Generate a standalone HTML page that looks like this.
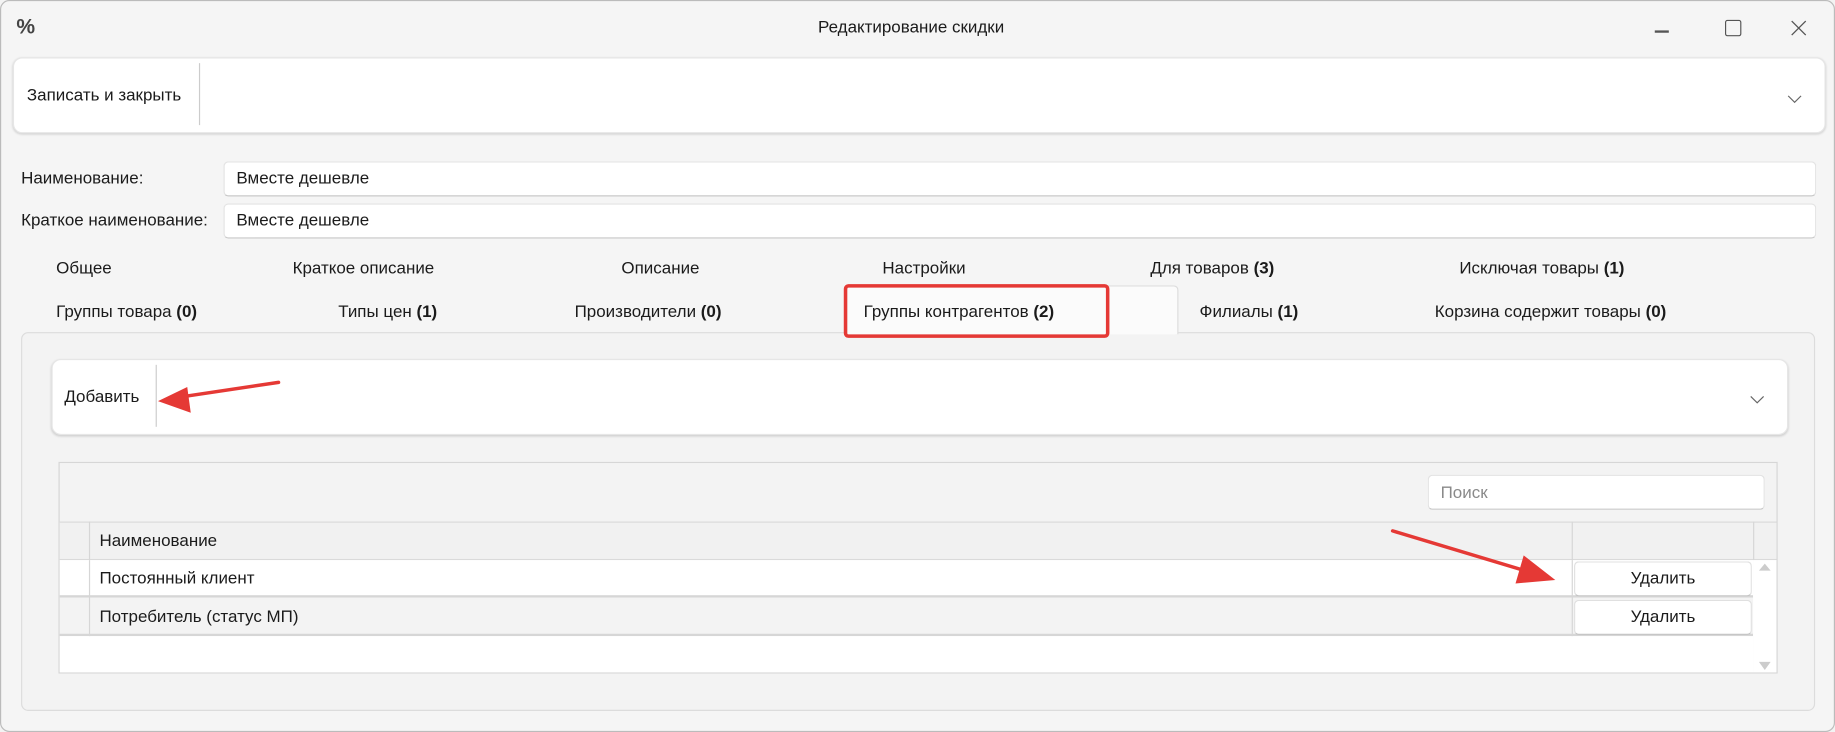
<!DOCTYPE html>
<html><head><meta charset="utf-8"><style>
html,body{margin:0;padding:0;width:1835px;height:732px;overflow:hidden;background:#f3f3f3}
#w{position:absolute;left:0;top:0;width:1568px;height:626px;transform-origin:0 0;transform:scale(1.17028,1.16933);font-family:"Liberation Sans","Noto Sans CJK SC",sans-serif;font-size:14.5px;color:#1b1b1b;background:#f5f5f5;border:1px solid #bbb;box-sizing:border-box;border-radius:8px;overflow:hidden}
.a{position:absolute;white-space:nowrap}
.t{position:absolute;white-space:nowrap;transform:translateY(-50%)}
.card{position:absolute;background:#fff;border-radius:8px;box-shadow:0 1px 2px rgba(0,0,0,.15);border:1px solid #e6e6e6}
.inp{position:absolute;background:#fff;border:1px solid #e3e3e3;border-bottom:1px solid #c8c8c8;border-radius:4px;box-sizing:border-box}
b{font-weight:bold}
.btn{position:absolute;left:1344px;width:152px;height:30px;background:#fff;border:1px solid #e0e0e0;border-bottom-color:#c5c5c5;border-radius:4px;box-sizing:border-box;text-align:center;line-height:28px}
</style></head><body><div id="w">
<div class="t" style="left:13px;top:22px;font-size:18px;font-weight:bold;color:#444">%</div>
<div class="t" style="left:698px;top:23px">Редактирование скидки</div>
<div class="a" style="left:1413px;top:25px;width:12px;height:1.5px;background:#555"></div>
<div class="a" style="left:1473px;top:16px;width:12px;height:12px;border:1.3px solid #555;border-radius:2px"></div>
<svg class="a" style="left:1529px;top:16px" width="14" height="14"><path d="M1 1L13 13M13 1L1 13" stroke="#555" stroke-width="1.1"/></svg>

<div class="card" style="left:10px;top:48px;width:1547px;height:63px"></div>
<div class="t" style="left:22px;top:81px">Записать и закрыть</div>
<div class="a" style="left:169px;top:53px;width:1px;height:53px;background:#ccc"></div>
<svg class="a" style="left:1526px;top:80px" width="13" height="8"><path d="M1 1L6.5 6.5L12 1" stroke="#666" fill="none"/></svg>

<div class="t" style="left:17px;top:152px">Наименование:</div>
<div class="inp" style="left:190px;top:137px;width:1361px;height:30px"></div>
<div class="t" style="left:201px;top:152px">Вместе дешевле</div>
<div class="t" style="left:17px;top:188px">Краткое наименование:</div>
<div class="inp" style="left:190px;top:173px;width:1361px;height:30px"></div>
<div class="t" style="left:201px;top:188px">Вместе дешевле</div>

<div class="t" style="left:47px;top:229px">Общее</div>
<div class="t" style="left:249px;top:229px">Краткое описание</div>
<div class="t" style="left:530px;top:229px">Описание</div>
<div class="t" style="left:753px;top:229px">Настройки</div>
<div class="t" style="left:982px;top:229px">Для товаров <b>(3)</b></div>
<div class="t" style="left:1246px;top:229px">Исключая товары <b>(1)</b></div>

<div class="a" style="left:17px;top:283px;width:1533px;height:324px;background:#f3f3f3;border:1px solid #dcdcdc;border-radius:6px;box-sizing:border-box"></div>
<div class="a" style="left:722px;top:243px;width:284px;height:42px;background:#fbfbfb;border:1px solid #dcdcdc;border-bottom:none;border-radius:4px 4px 0 0;box-sizing:border-box"></div>
<div class="t" style="left:47px;top:266px">Группы товара <b>(0)</b></div>
<div class="t" style="left:288px;top:266px">Типы цен <b>(1)</b></div>
<div class="t" style="left:490px;top:266px">Производители <b>(0)</b></div>
<div class="t" style="left:737px;top:266px">Группы контрагентов <b>(2)</b></div>
<div class="t" style="left:1024px;top:266px">Филиалы <b>(1)</b></div>
<div class="t" style="left:1225px;top:266px">Корзина содержит товары <b>(0)</b></div>
<div class="a" style="left:720px;top:242px;width:227px;height:46px;border:3px solid #e53935;border-radius:4px;box-sizing:border-box"></div>

<div class="card" style="left:43px;top:306px;width:1482px;height:63px"></div>
<div class="t" style="left:54px;top:339px">Добавить</div>
<div class="a" style="left:132px;top:311px;width:1px;height:53px;background:#ccc"></div>
<svg class="a" style="left:1494px;top:337px" width="13" height="8"><path d="M1 1L6.5 6.5L12 1" stroke="#666" fill="none"/></svg>

<div class="a" style="left:49px;top:394px;width:1469px;height:181px;border:1px solid #d6d6d6;box-sizing:border-box;background:#f3f3f3"></div>
<div class="inp" style="left:1219px;top:405px;width:288px;height:30px"></div>
<div class="t" style="left:1230px;top:421px;color:#8a8a8a">Поиск</div>
<div class="a" style="left:50px;top:445px;width:1467px;height:33px;background:#f1f1f1;border-top:1px solid #dadada;border-bottom:1px solid #dadada;box-sizing:border-box"></div>
<div class="a" style="left:75px;top:445px;width:1px;height:98px;background:#d6d6d6"></div>
<div class="a" style="left:1342px;top:445px;width:1px;height:98px;background:#d6d6d6"></div>
<div class="a" style="left:1497px;top:445px;width:1px;height:33px;background:#d6d6d6"></div>
<div class="t" style="left:84px;top:462px">Наименование</div>
<div class="a" style="left:50px;top:478px;width:1447px;height:32px;background:#fff;border-bottom:2px solid #d6d6d6;box-sizing:border-box"></div>
<div class="a" style="left:50px;top:510px;width:1447px;height:33px;background:#f3f3f3;border-bottom:2px solid #d6d6d6;box-sizing:border-box"></div>
<div class="a" style="left:50px;top:543px;width:1447px;height:31px;background:#fff"></div>
<div class="a" style="left:1497px;top:478px;width:20px;height:96px;background:#fff"></div>
<svg class="a" style="left:1502px;top:480px" width="10" height="94"><path d="M0 7L5 1L10 7Z M0 85L5 92L10 85Z" fill="#ccc"/></svg>
<div class="a" style="left:75px;top:478px;width:1px;height:65px;background:#d6d6d6"></div>
<div class="a" style="left:1342px;top:478px;width:1px;height:65px;background:#d6d6d6"></div>
<div class="t" style="left:84px;top:494px">Постоянный клиент</div>
<div class="t" style="left:84px;top:527px">Потребитель (статус МП)</div>
<div class="btn" style="top:479px">Удалить</div>
<div class="btn" style="top:512px">Удалить</div>

<svg class="a" style="left:0;top:0" width="1568" height="626">
<path d="M237 326L150 339" stroke="#e53935" stroke-width="3" stroke-linecap="round"/>
<path d="M134 342L159 330L162 352Z" fill="#e53935"/>
<path d="M1189 453L1312 490" stroke="#e53935" stroke-width="3" stroke-linecap="round"/>
<path d="M1328 495L1301 474L1294 498Z" fill="#e53935"/>
</svg>
</div></body></html>
